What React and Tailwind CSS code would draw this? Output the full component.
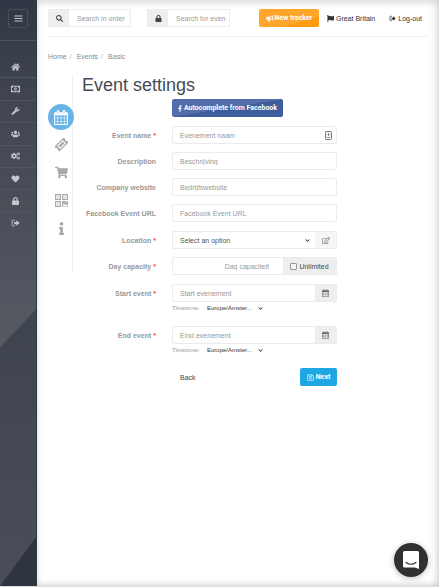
import React from "react";
import {
  FaHome, FaWrench, FaUsers, FaCogs, FaHeart, FaLock,
  FaSearch, FaFlag, FaFacebookF, FaShoppingCart, FaInfo,
  FaRegEdit, FaRegSave, FaChevronDown,
} from "react-icons/fa";

function SignOut({ className }) {
  return (
    <svg viewBox="0 0 16 14" className={className} aria-hidden="true">
      <path d="M6 2H3.2Q2 2 2 3.2v7.6Q2 12 3.2 12H6" fill="none" stroke="currentColor" strokeWidth="1.6" strokeLinecap="round" />
      <path d="M5.5 5h4V2l6 5-6 5V9h-4z" fill="currentColor" />
    </svg>
  );
}

function Bars({ className }) {
  return (
    <svg viewBox="0 0 9 9" className={className} aria-hidden="true">
      <path d="M0.500 2h8M0.500 4.500h8M0.500 7h8" stroke="currentColor" strokeWidth="1.100" />
    </svg>
  );
}

function Money({ className }) {
  return (
    <svg viewBox="0 0 20 14" className={className} aria-hidden="true">
      <path
        fill="currentColor"
        fillRule="evenodd"
        d="M0 0h20v14H0zM4.500 2A2.500 2.500 0 0 1 2 4.500v5A2.500 2.500 0 0 1 4.500 12h11A2.500 2.500 0 0 1 18 9.500v-5A2.500 2.500 0 0 1 15.500 2z"
      />
      <ellipse cx="10" cy="7" rx="3" ry="4" fill="currentColor" />
      <path d="M9.300 5.500l1-.8V9.500" fill="none" stroke="#414652" />
    </svg>
  );
}

function Megaphone({ className }) {
  return (
    <svg viewBox="0 0 18 16" className={className} aria-hidden="true">
      <path d="M1.500 4H9v6H7.500l1 5H5l-1.500-5h-2A1.500 1.500 0 0 1 0 8.500v-3A1.500 1.500 0 0 1 1.500 4z" fill="currentColor" />
      <path d="M8.500 5Q12 5 15 2v10q-3-3-6.500-3" fill="none" stroke="currentColor" strokeWidth="2" strokeLinejoin="round" />
      <path d="M16 5.500a1.500 1.500 0 0 1 0 3z" fill="currentColor" />
    </svg>
  );
}

function Calendar({ className }) {
  return (
    <svg viewBox="0 0 26 28" className={className} aria-hidden="true">
      <path
        fill="currentColor"
        fillRule="evenodd"
        d="M2 4h3V2.500a2.500 2.500 0 0 1 5 0V4h6V2.500a2.500 2.500 0 0 1 5 0V4h3a2 2 0 0 1 2 2v20a2 2 0 0 1-2 2H2a2 2 0 0 1-2-2V6a2 2 0 0 1 2-2zM2 10v4.500h4.500V10zM7.500 10v4.500h5V10zM13.500 10v4.500h5V10zM19.500 10v4.500H24V10zM2 15.500v5h4.500v-5zM7.500 15.500v5h5v-5zM13.500 15.500v5h5v-5zM19.500 15.500v5H24v-5zM2 21.500V26h4.500v-4.500zM7.500 21.500V26h5v-4.500zM13.500 21.500V26h5v-4.500zM19.500 21.500V26H24v-4.500zM7 2.500V7h1V2.500zM18 2.500V7h1V2.500z"
      />
    </svg>
  );
}

function Ticket({ className }) {
  return (
    <svg viewBox="0 0 26 26" className={className} aria-hidden="true">
      <g transform="rotate(-45 13 13)">
        <path fill="currentColor" fillRule="evenodd" d="M0 6h26v4.500a2.600 2.600 0 0 0 0 5V20H0v-4.500a2.600 2.600 0 0 0 0-5zM5 8.500v9h16v-9z" />
        <path fill="currentColor" d="M7 10.500h12v5H7z" />
      </g>
    </svg>
  );
}

function QrCode({ className }) {
  return (
    <svg viewBox="0 0 22 22" className={className} aria-hidden="true">
      <path fill="none" stroke="currentColor" strokeWidth="2" d="M1 1h8v8H1zM13 1h8v8h-8zM1 13h8v8H1z" />
      <path fill="currentColor" d="M4 4h2v2H4zM16 4h2v2h-2zM4 16h2v2H4zM12 12h6v2h2v-2h2v6h-6v-2h-2v6h-2zM16 20h2v2h-2zM20 20h2v2h-2z" />
    </svg>
  );
}

const NAV = [
  ["Home", FaHome], ["Payments", Money], ["Tools", FaWrench], ["Users", FaUsers],
  ["Settings", FaCogs], ["Favourites", FaHeart], ["Security", FaLock], ["Log-out", SignOut],
];

function Sidebar() {
  return (
    <aside className="relative w-[37px] shrink-0 overflow-hidden border-r border-[#343a45] bg-[#474b56] text-[#c3c6cb]">
      <svg viewBox="0 0 37 585" preserveAspectRatio="none" className="absolute inset-0 h-full w-full" aria-hidden="true">
        <defs>
          <linearGradient id="upper" x1="0" y1="0" x2="0" y2="1">
            <stop offset="0" stopColor="#303643" />
            <stop offset="0.3" stopColor="#414652" />
            <stop offset="1" stopColor="#555a63" />
          </linearGradient>
          <linearGradient id="lower" x1="0" y1="0" x2="0" y2="1">
            <stop offset="0" stopColor="#3d434d" />
            <stop offset="1" stopColor="#4b4e59" />
          </linearGradient>
        </defs>
        <path d="M0 300H37V585H0z" fill="url(#lower)" />
        <path d="M0 0H37V309L0 347z" fill="url(#upper)" />
        <path d="M37 536V585H0z" fill="#2e3440" />
      </svg>
      <div className="relative">
        <div className="flex h-[41px] justify-center border-b border-[#4c535e] pt-[9px]">
          <button type="button" aria-label="Menu" className="flex h-[19px] w-5 items-center justify-center rounded-xs border border-[#484e5a]">
            <Bars className="h-[9px] w-[9px]" />
          </button>
        </div>
        <nav className="mt-[15px] grid h-[179px] grid-rows-8">
          {NAV.map(([label, Icon]) => (
            <a key={label} href="#" aria-label={label} className="flex items-center border-b border-[#50555f] pl-[11px]">
              <span className="flex w-[9px] justify-center">
                <Icon className="h-2 w-[9px] shrink-0" />
              </span>
            </a>
          ))}
        </nav>
      </div>
    </aside>
  );
}

function Search({ label, Icon, placeholder }) {
  return (
    <div className="flex h-[18px] w-[83px] border border-[#ececec]">
      <span className="flex w-5 shrink-0 items-center justify-center bg-[#eeeeee] text-[#444]">
        <Icon className="h-[7px] w-[7px]" />
      </span>
      <input aria-label={label} placeholder={placeholder} className="mr-0.5 ml-2 w-full min-w-0 bg-transparent outline-none placeholder:text-[#999]" />
    </div>
  );
}

function Header() {
  return (
    <header className="flex h-7 items-start border-b border-[#eeeeee]">
      <Search label="Search in orders" Icon={FaSearch} placeholder="Search in order" />
      <div className="ml-4">
        <Search label="Search for events" Icon={FaLock} placeholder="Search for even" />
      </div>
      <div className="ml-auto flex h-[18px] items-center pr-1.5 text-[#333]">
        <button type="button" className="flex h-[18px] w-[60px] items-center justify-center gap-px rounded-xs bg-linear-to-br from-[#ffa62b] from-70% to-[#ff9b10] to-70% font-['Roboto',sans-serif] font-bold whitespace-nowrap text-white">
          <Megaphone className="h-[7px] w-2" />
          New tracker
        </button>
        <a href="#" className="ml-2 flex items-center gap-0.5 whitespace-nowrap">
          <FaFlag className="h-[7px] w-[7px]" />
          Great Britain
        </a>
        <a href="#" className="ml-3.5 flex items-center gap-0.5 whitespace-nowrap">
          <SignOut className="h-[7px] w-[7px]" />
          Log-out
        </a>
      </div>
    </header>
  );
}

function Steps() {
  const steps = [["Tickets", Ticket], ["Shop", FaShoppingCart], ["Scan codes", QrCode], ["Information", FaInfo]];
  return (
    <nav className="relative h-[197px] w-[25px] shrink-0 border-r border-[#f1f1f1]">
      <div className="flex w-[26px] flex-col items-center pt-[29px]">
        <a href="#" aria-label="Event" className="flex h-[26px] w-[26px] items-center justify-center rounded-full bg-[#69b3e7] text-white">
          <Calendar className="h-[15px] w-[14px]" />
        </a>
        <div className="flex flex-col">
          {steps.map(([label, Icon]) => (
            <a key={label} href="#" aria-label={label} className="flex h-7 items-center justify-center text-[#a9a9a9]">
              <Icon className="h-[13px] w-[13px]" />
            </a>
          ))}
        </div>
      </div>
    </nav>
  );
}

const BOX = "flex h-[18px] w-full border border-[#ebebeb] rounded-xs bg-white";
const INPUT = "w-full min-w-0 bg-transparent px-[7px] outline-none placeholder:text-[#999]";

function Row({ id, label, required, children }) {
  return (
    <div className="grid grid-cols-[74px_minmax(0,1fr)] gap-x-4">
      <label htmlFor={id} className="flex h-[18px] items-center justify-end gap-0.5 font-bold whitespace-nowrap text-[#999]">
        {label}
        {required && <span className="text-[#f0512d]">*</span>}
      </label>
      <div>{children}</div>
    </div>
  );
}

function TextRow({ id, label, required, placeholder, badge }) {
  return (
    <Row id={id} label={label} required={required}>
      <div className={BOX}>
        <input id={id} placeholder={placeholder} className={INPUT} />
        {badge && (
          <svg viewBox="0 0 14 18" className="mt-1 mr-1 h-[9px] w-[7px] shrink-0" aria-hidden="true">
            <rect x="1" y="1" width="12" height="16" rx="1.500" fill="#f5f5f5" stroke="#777" strokeWidth="2" />
            <path d="M7 4v6M5 7h4M4 13h6" stroke="#777" strokeWidth="1.600" />
          </svg>
        )}
      </div>
    </Row>
  );
}

function DateRow({ id, label, placeholder }) {
  return (
    <Row id={id} label={label} required>
      <div className={BOX}>
        <input id={id} placeholder={placeholder} className={INPUT} />
        <button type="button" aria-label={"Pick " + label} className="flex w-[21px] shrink-0 items-center justify-center bg-[#eeeeee] text-[#666]">
          <Calendar className="h-2 w-[7px]" />
        </button>
      </div>
      <div className="flex h-3 items-center text-[6px] text-[#999]">
        <label htmlFor={id + "-tz"} className="w-[35px]">Timezone:</label>
        <div className="relative w-[56px]">
          <select id={id + "-tz"} className="block w-full appearance-none bg-transparent text-[#333] outline-none">
            <option>Europe/Amster...</option>
          </select>
          <FaChevronDown className="pointer-events-none absolute top-0.5 right-0 h-[5px] w-[5px] text-[#333]" />
        </div>
      </div>
    </Row>
  );
}

function EventForm() {
  return (
    <form className="mt-1 flex w-full max-w-[255px] flex-col gap-2" onSubmit={(e) => e.preventDefault()}>
      <div className="pb-px pl-[90px]">
        <button type="button" className="flex h-[18px] w-[111px] items-center justify-center gap-0.5 rounded-xs bg-linear-to-br from-[#526fab] from-50% to-[#3f5c9d] to-50% font-['Roboto',sans-serif] font-bold whitespace-nowrap text-white">
          <FaFacebookF className="h-[7px] w-1" />
          Autocomplete from Facebook
        </button>
      </div>
      <TextRow id="name" label="Event name" required placeholder="Evenement naam" badge />
      <TextRow id="description" label="Description" placeholder="Beschrijving" />
      <TextRow id="website" label="Company website" placeholder="Bedrijfswebsite" />
      <div className="pb-px">
        <TextRow id="facebook" label="Facebook Event URL" placeholder="Facebook Event URL" />
      </div>
      <Row id="location" label="Location" required>
        <div className={BOX}>
          <div className="relative flex min-w-0 flex-1">
            <select id="location" className="w-full appearance-none bg-transparent px-[7px] text-[#555] outline-none">
              <option>Select an option</option>
            </select>
            <FaChevronDown className="pointer-events-none absolute top-1.5 right-[5px] h-[5px] w-[5px] text-[#333]" />
          </div>
          <button type="button" aria-label="Edit location" className="flex w-[21px] shrink-0 items-center justify-center bg-[#f6f6f6] text-[#888]">
            <FaRegEdit className="h-[7px] w-2" />
          </button>
        </div>
      </Row>
      <div className="pb-px">
        <Row id="capacity" label="Day capacity" required>
          <div className={BOX}>
            <input id="capacity" placeholder="Dag capaciteit" className="w-full min-w-0 bg-transparent pr-3.5 text-right outline-none placeholder:text-[#999]" />
            <label className="flex w-[53px] shrink-0 items-center justify-center gap-0.5 bg-[#eeeeee] text-[#444]">
              <input type="checkbox" className="h-[7px] w-[7px] appearance-none rounded-[1px] border border-[#999] bg-[#f4f4f4] checked:bg-[#555]" />
              Unlimited
            </label>
          </div>
        </Row>
      </div>
      <DateRow id="start" label="Start event" placeholder="Start evenement" />
      <div className="pt-1">
        <DateRow id="end" label="End event" placeholder="Eind evenement" />
      </div>
      <div className="mt-1 flex items-center justify-between pl-[98px]">
        <button type="button" className="text-[#444]">Back</button>
        <button type="submit" className="flex h-[18px] w-[37px] items-center justify-center gap-0.5 rounded-xs bg-[#1fa7e4] font-['Roboto',sans-serif] font-bold text-white">
          <FaRegSave className="h-[7px] w-[7px]" />
          Next
        </button>
      </div>
    </form>
  );
}

export default function App() {
  return (
    <div className="flex min-h-screen border-b border-[#dcdcdc] bg-white font-['Liberation_Sans',Arial,sans-serif] text-[7px] leading-[9px]">
      <Sidebar />
      <main className="min-w-0 flex-1 pt-[9px] pr-[11px] pl-[11px] shadow-[inset_-3px_0_8px_#0000001a,inset_0_4px_6px_#00000014,inset_0_-3px_4px_#00000012]">
        <Header />
        <nav aria-label="Breadcrumb" className="mt-[15px] flex text-[#8a8a8a]">
          <a href="#">Home</a>
          <span className="ml-[3px] w-[7px] text-[#bbb]">/</span>
          <a href="#">Events</a>
          <span className="ml-[3px] w-[7px] text-[#bbb]">/</span>
          <span>Basic</span>
        </nav>
        <div className="mt-[14px] flex gap-[9px]">
          <Steps />
          <section className="min-w-0 flex-1">
            <h1 className="text-[18px] leading-5 text-[#454b55]">Event settings</h1>
            <EventForm />
          </section>
        </div>
      </main>
      <button type="button" aria-label="Open chat" className="fixed right-[11px] bottom-[10px] flex h-[34px] w-[34px] items-center justify-center rounded-full bg-[#303030] shadow-[0_1px_6px_#00000044]">
        <svg viewBox="0 0 18 20" className="h-5 w-[18px]" aria-hidden="true">
          <path d="M2.500 1h13A1.500 1.500 0 0 1 17 2.500V19l-4-1.500H2.500A1.500 1.500 0 0 1 1 16V2.500A1.500 1.500 0 0 1 2.500 1z" fill="#fff" />
          <path d="M4 12.500q5 3.500 10 0" fill="none" stroke="#303030" strokeWidth="1.200" strokeLinecap="round" />
        </svg>
      </button>
    </div>
  );
}
